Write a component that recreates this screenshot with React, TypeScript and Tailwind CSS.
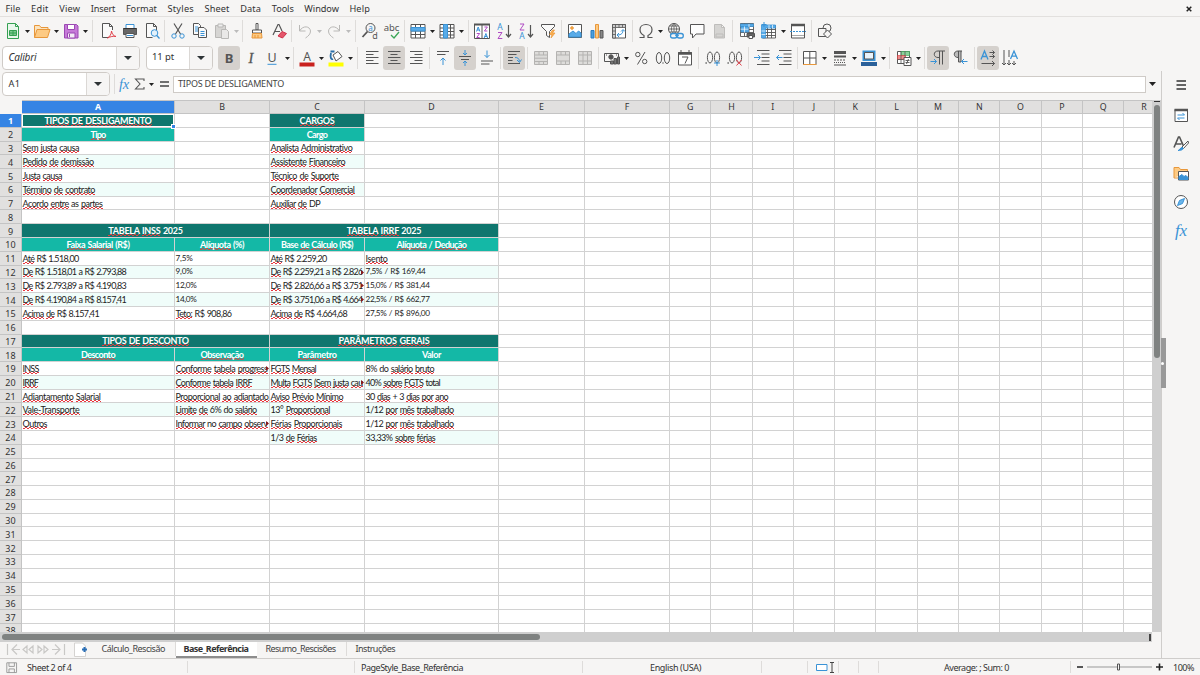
import { useLayoutEffect, useRef, type ReactNode } from "react";

const K = "#555555";
const B = "#3a93d6";
const G = "#b9b8b6";

/* Text whose tracking is adjusted so that it takes a given width. */
function Fit({ w, className = "", children }: { w: number; className?: string; children: ReactNode }) {
  const ref = useRef<HTMLSpanElement>(null);
  useLayoutEffect(() => {
    const el = ref.current;
    if (!el) return;
    el.style.letterSpacing = "0px";
    const n = (el.textContent || "").length;
    el.style.letterSpacing = `${(w - el.getBoundingClientRect().width) / n}px`;
  }, [w]);
  return (
    <span ref={ref} className={`inline-block whitespace-pre ${className}`}>
      {children}
    </span>
  );
}

function Svg({ children, s = 18 }: { children: ReactNode; s?: number }) {
  return (
    <svg width={s} height={s} viewBox="0 0 18 18" fill="none" stroke={K} strokeWidth="1" className="shrink-0">
      {children}
    </svg>
  );
}

function T({ x, y, s, c = K, children, w = "400", f = "Noto Sans, sans-serif" }: { x: number; y: number; s: number; c?: string; children: ReactNode; w?: string; f?: string }) {
  return (
    <text x={x} y={y} fontSize={s} fill={c} stroke="none" fontFamily={f} fontWeight={w} textAnchor="middle">
      {children}
    </text>
  );
}

const lines = (ys: number[], x1: number[], x2: number[]) => ys.map((y, i) => <path key={y} d={`M${x1[i % x1.length]} ${y}H${x2[i % x2.length]}`} />);

const icons: Record<string, ReactNode> = {
  new: (
    <>
      <path d="M3.5 1.5h8l3 3v12h-11z" fill="#e9f7ec" stroke="#35a052" />
      <path d="M11.5 1.5v3h3" stroke="#35a052" />
      <path d="M5.500 8.500h7v5h-7zM9 8.500v5M5.500 11h7" fill="#7ccb8f" stroke="#35a052" />
    </>
  ),
  open: (
    <>
      <path d="M1.500 15.500v-12h5l1.500 2h7v3" fill="#fbe3bd" stroke="#e8973a" />
      <path d="M1.500 15.500l2.500-8h13l-2.500 8z" fill="#fdca83" stroke="#e8973a" />
    </>
  ),
  save: (
    <>
      <path d="M2.500 2.500h12l1.500 1.500v12h-13.500z" fill="#c67ad8" stroke="#9b48b3" />
      <path d="M5.500 2.500h7v5h-7z" fill="#fff" stroke="#9b48b3" />
      <path d="M5.500 11h7.500v5h-7.500z" fill="#f4ecf6" stroke="#9b48b3" />
      <path d="M7.500 12v3" stroke="#9b48b3" />
    </>
  ),
  pdf: (
    <>
      <path d="M13.500 8V4.500l-3-3h-7v14h6M10.500 1.500v3h3" fill="#fafafa" />
      <path d="M8.500 16c2-1 4-4 4-7 .5 3 2 5 4.500 5.500-3-.7-5.500.2-8.500 1.500z" stroke="#e0404a" />
    </>
  ),
  print: (
    <>
      <path d="M5 2.500h8v4h-8z" fill="#fff" stroke="#3a93d6" />
      <path d="M2.500 6.500h13v6h-13z" fill="#666" />
      <path d="M2.500 6.500h13" stroke="#333" />
      <path d="M5 11.500h8v4h-8z" fill="#fff" />
      <path d="M6 13.500h6" stroke={B} />
    </>
  ),
  preview: (
    <>
      <path d="M13.500 8V4.500l-3-3h-7v14h6M10.500 1.500v3h3" fill="#fafafa" />
      <circle cx="11.500" cy="11" r="3.300" stroke={B} fill="#e3f1fb" />
      <path d="M13.800 13.500l2.700 3" stroke={B} strokeWidth="1.300" />
    </>
  ),
  cut: (
    <>
      <path d="M5 1.500l6.500 10.500M13 1.500L6.500 12" strokeWidth="1.200" />
      <circle cx="5" cy="14" r="2.200" stroke={B} />
      <circle cx="13" cy="14" r="2.200" stroke={B} />
    </>
  ),
  copy: (
    <>
      <path d="M2.500 1.500h5l2 2v9h-7z" fill="#fafafa" />
      <path d="M4 5h3M4 7h3M4 9h3" stroke={B} />
      <path d="M7.500 5.500h5.500l2.500 2.500v7.500h-8z" fill="#fafafa" />
      <path d="M9.500 9.500h4M9.500 11.500h4M9.500 13.500h4" stroke={B} />
    </>
  ),
  paste: (
    <g stroke={G}>
      <path d="M2.500 3.500h10v12h-10z" fill="#d6d5d3" />
      <path d="M5 2h5v3h-5z" fill="#eee" />
      <path d="M8.500 7.500h5l2 2v7h-7z" fill="#e9e8e7" />
    </g>
  ),
  clone: (
    <>
      <path d="M8 1.500h2v6.500h-2z" fill="#fff" />
      <path d="M4.500 8h9v3h-9z" fill="#fff" />
      <path d="M4.500 11.500h9l.5 4.500h-10z" fill="#fdca83" stroke="#e8973a" />
      <path d="M7 13v3M10 13v3" stroke="#e8973a" />
    </>
  ),
  clear: (
    <>
      <path d="M3 13L8 2.500h1L12 9M5 9.500h5" strokeWidth="1.200" />
      <path d="M8 14l4-4.500 4.500 2-4 4.500z" fill="#e4576b" stroke="#cf2f48" />
    </>
  ),
  undo: <path d="M3.500 3v6h6M3.500 9C7 3 14 4 14.500 9c0 3-2 5-5 7" stroke={G} />,
  redo: <path d="M14.500 3v6h-6M14.500 9C11 3 4 4 3.500 9c0 3 2 5 5 7" stroke={G} />,
  find: (
    <>
      <circle cx="9.500" cy="6" r="4.500" />
      <path d="M6.500 9.500l-5 5.500" strokeWidth="1.800" />
      <T x={9.500} y={8.500} s={8} c={B}>a</T>
      <T x={14} y={16.500} s={9}>d</T>
    </>
  ),
  spell: (
    <>
      <T x={8.500} y={9} s={9.500}>abc</T>
      <path d="M8 13l3 3 5-6" stroke="#3aa757" strokeWidth="1.300" />
    </>
  ),
  row: (
    <>
      <path d="M2 2.500h14v13.500h-14zM2 12.500h14M6.500 2v14M11.500 2v14M2 9h14" fill="#fff" />
      <path d="M2 5.500h14v3.500h-14z" fill="#58abe8" stroke={B} />
    </>
  ),
  col: (
    <>
      <path d="M2 2.500h14v13.500h-14zM2 6h14M2 9.500h14M2 13h14M12.500 2v14" fill="#fff" />
      <path d="M5.500 2.500h4v13.500h-4z" fill="#58abe8" stroke={B} />
    </>
  ),
  sort: (
    <>
      <path d="M1.500 2.500h15v14h-15zM9 2.500v14" fill="#fff" />
      <path d="M1 2.500h16" strokeWidth="2" />
      <path d="M3.500 9.500l1.700-4.500 1.700 4.500M4 8h2.400M11.200 16l1.700-4.500 1.700 4.500M11.700 14.500h2.400" stroke={B} />
      <path d="M3.700 11.500h3l-3 4h3M11.400 5h3l-3 4h3" stroke="#b04cc4" />
    </>
  ),
  asc: (
    <>
      <T x={5} y={8} s={8.500} c={B}>A</T>
      <path d="M3 10.500h4l-4 6h4.300" stroke="#b04cc4" />
      <path d="M13.500 3v12M11 12l2.500 3 2.500-3" strokeWidth="1.200" />
    </>
  ),
  desc: (
    <>
      <path d="M3 2h4l-4 6h4.300" stroke="#b04cc4" />
      <T x={5} y={17} s={8.500} c={B}>A</T>
      <path d="M13.500 3v12M11 12l2.500 3 2.500-3" strokeWidth="1.200" />
    </>
  ),
  filter: (
    <>
      <path d="M2.500 2.500h13v2l-5 5v6l-3-2v-4l-5-5z" fill="#fafafa" />
      <path d="M13.500 8l-3 4.500h2.500l-1 3.500 4-5h-2.500l2-3z" fill="#fdb04e" stroke="#e8973a" strokeWidth=".7" />
    </>
  ),
  image: (
    <>
      <path d="M2.500 2.500h13v13h-13z" fill="#fff" />
      <path d="M3 15v-3l4-3 3 2.500 2.500-2.500 2.500 2v4z" fill="#58abe8" stroke={B} />
      <circle cx="6" cy="6" r="1.300" fill="#fdb04e" stroke="#e8973a" />
    </>
  ),
  chart: (
    <>
      <path d="M3 8.500h3v7.500h-3z" fill="#4b9fde" stroke="#2b7bbd" />
      <path d="M7.500 2.500h3v13.500h-3z" fill="#fdca83" stroke="#e8973a" />
      <path d="M12 8.500h3v7.500h-3z" fill="#888" />
    </>
  ),
  pivot: (
    <>
      <path d="M2.500 2.500h13v13.500h-13z" fill="#fff" />
      <path d="M2.500 2.500h13v3h-10v10.500h-3z" fill="#ccc" strokeWidth=".8" />
      <path d="M5.500 2.500v3h-3M9 2.500v3M12.500 2.500v3M2.500 9h3M2.500 12.500h3" strokeWidth=".8" />
      <path d="M7.500 13c4 0 5.500-2 5.500-5M11 9.500l2-2 2 2M9 11l-2 2 2 2" stroke={B} />
    </>
  ),
  omega: <path d="M2.500 15.500h4.500v-2c-3-1.500-4-4-4-6C3 4.500 5.500 2.500 9 2.500s6 2 6 5c0 2-1 4.500-4 6v2h4.500" strokeWidth="1.200" />,
  link: (
    <>
      <circle cx="8" cy="7" r="5.500" />
      <path d="M2.500 7h11M8 1.500v11M8 1.500c-3.500 3-3.500 8 0 11M8 1.500c3.500 3 3.500 8 0 11M3.500 4h9M3.500 10h9" strokeWidth=".8" />
      <rect x="4.500" y="11.500" width="6.500" height="4.500" rx="2.200" stroke={B} fill="#f6f5f4" strokeWidth="1.300" />
      <rect x="11" y="11.500" width="6.300" height="4.500" rx="2.200" stroke={B} fill="#f6f5f4" strokeWidth="1.300" />
      <path d="M9 13.700h4" stroke={B} />
    </>
  ),
  comment: <path d="M2.500 2.500h13.500v9.500h-8l-3.500 4v-4h-2z" fill="#fdfdfd" />,
  header: <path d="M4.500 2.500h7l3 3v10.500h-10zM11.500 2.500v3h3M6 12h7v3h-7z" fill="#d5d4d2" stroke="#bebdbb" />,
  parea: (
    <>
      <path d="M2.500 1.500h13v13h-13zM2.500 4.500h13M2.500 7.500h13M2.500 10.500h13M6.500 1.500v13M11 1.500v13" fill="#fff" strokeWidth=".9" />
      <path d="M2.500 2h13v2.500h-13zM3 4.500h7.500v5.500h-7.500z" fill="#58abe8" stroke={B} strokeWidth=".7" />
      <path d="M2.500 7.200h8M6.500 4.500v6M11 2v3" stroke="#fff" strokeWidth=".7" />
      <path d="M9 11.500h7.500v3.500h-7.500z" fill="#666" />
      <path d="M11 13.500h3.500v3h-3.500z" fill="#fff" />
    </>
  ),
  freeze: (
    <>
      <path d="M2.500 3.500h13v12.500h-13zM2.500 7.500h13M2.500 10.500h13M2.500 13.500h13M7.500 3.500v12.500M11.500 3.500v12.500" fill="#fff" strokeWidth=".9" />
      <path d="M1.500 3h14v3h-10v10h-4z" fill="#58abe8" stroke={B} strokeWidth=".8" />
      <path d="M1.500 9h4M1.500 12.500h4M9 3v3M12.500 3v3" stroke="#fff" strokeWidth=".7" />
      <path d="M4 0v5M1.500 2.500h5" stroke={B} />
    </>
  ),
  split: (
    <>
      <path d="M2.500 3h13v13h-13z" fill="#fff" />
      <path d="M2 3h14" strokeWidth="2.500" />
      <path d="M1 9.500h16" stroke={B} strokeDasharray="2 1" />
      <path d="M2.500 13.500h13" strokeWidth=".5" />
    </>
  ),
  shapes: (
    <>
      <circle cx="11" cy="6" r="4" />
      <path d="M2.500 6.500h7.500v8h-7.500z" fill="#f6f5f4" />
      <path d="M11.500 8l4 4-4 4-4-4z" fill="#f6f5f4" />
    </>
  ),
  bold: <T x={9} y={13.500} s={13} w="700">B</T>,
  italic: (
    <text x="9" y="14" fontSize="14.500" fill={K} stroke={K} strokeWidth=".3" fontStyle="italic" fontFamily="Liberation Serif, serif" textAnchor="middle">
      I
    </text>
  ),
  under: (
    <>
      <T x={8} y={12.500} s={12.500}>U</T>
      <path d="M3.500 15.300h9" stroke={B} />
    </>
  ),
  fcolor: (
    <>
      <T x={9} y={11.500} s={12}>A</T>
      <path d="M1.500 15.500h15" stroke="#c9211e" strokeWidth="4" />
    </>
  ),
  hilite: (
    <>
      <path d="M6 6l5-3.500 4 5-6 4.500z" fill="#fff" />
      <path d="M4 4c-1 4 0 7 2 6M3.500 2.500h4" stroke="#2b6fa8" strokeWidth="1.800" />
      <path d="M1.500 15.500h15" stroke="#ffff00" strokeWidth="4" />
    </>
  ),
  left: <>{lines([2.500, 5.500, 8.500, 11.500, 14.500], [3], [15.500, 10.500])}</>,
  center: <>{lines([2.500, 5.500, 8.500, 11.500, 14.500], [3, 5.500], [15.500, 12.500])}</>,
  right: <>{lines([2.500, 5.500, 8.500, 11.500, 14.500], [3, 7.500], [15.500, 15.500])}</>,
  top: (
    <>
      {lines([2.500, 5.500], [3, 3], [15, 11.500])}
      <path d="M9 16v-7M6.500 11.500l2.500-2.500 2.500 2.500" stroke={B} />
    </>
  ),
  middle: (
    <>
      {lines([7.500, 10.500], [3, 5], [15, 13])}
      <path d="M9 1v5M7 4l2 2 2-2M9 17v-5M7 14l2-2 2 2" stroke={B} />
    </>
  ),
  bottom: (
    <>
      {lines([12, 15], [3, 3], [15, 11.500])}
      <path d="M9 1.500v7M6.500 6l2.500 2.500 2.500-2.500" stroke={B} />
    </>
  ),
  wrap: (
    <>
      {lines([2.500, 5.500, 8.500, 11.500, 14.500], [3], [15, 11.500, 8, 7.500, 15])}
      <path d="M10 8.500c3 0 4 1 4.500 4M12 11l2.500 2.500 2-3" stroke={B} />
    </>
  ),
  merge1: <path d="M2.500 2.500h13v13h-13zM2.500 6h13M2.500 12.500h13M7 2.500v3.500M11.500 2.500v3.500M7 12.500v3M11.500 12.500v3M2.500 9.200h13" fill="#dddcda" stroke="#b4b3b1" />,
  merge2: <path d="M2.500 2.500h13v13h-13zM2.500 6h13M2.500 12h13M7 2.500v3.500M11.500 2.500v3.500M7 12v3.500M11.500 12v3.500" fill="#dddcda" stroke="#b4b3b1" />,
  merge3: <path d="M2.500 2.500h13v13h-13zM2.500 6h13M2.500 12h13M7 2.500v13M11.500 2.500v13" fill="#dddcda" stroke="#b4b3b1" />,
  currency: (
    <>
      <path d="M1.500 4.500h14v8h-14z" />
      <circle cx="8" cy="8" r="2.200" fill={K} />
      <path d="M3 6h1M13 6h1" />
      <path d="M7.500 12h3v3h-3zM11 9.500h2.500v5.500h-2.500zM14.500 8h2v7h-2z" fill="#777" />
    </>
  ),
  percent: (
    <>
      <circle cx="5.800" cy="5.500" r="2.200" />
      <circle cx="12.700" cy="12.500" r="2.200" />
      <path d="M13 3l-7.500 12.500" />
    </>
  ),
  dec: (
    <>
      <ellipse cx="5" cy="9" rx="2.700" ry="5.500" />
      <ellipse cx="13" cy="9" rx="2.700" ry="5.500" />
      <path d="M8.500 14h1" strokeWidth="1.300" />
    </>
  ),
  date: (
    <>
      <path d="M2.500 3.500h13v12.500h-13z" fill="#fff" />
      <path d="M2 4.500h14" strokeWidth="2.500" />
      <path d="M5 1v3M13 1v3M6 8h6l-3 6.500" />
    </>
  ),
  decadd: (
    <>
      <ellipse cx="6" cy="8.500" rx="2.600" ry="5.500" />
      <ellipse cx="13" cy="8.500" rx="2.600" ry="5.500" />
      <path d="M1.500 14h1.300" strokeWidth="1.500" />
      <path d="M13 11v6M10 14h6" stroke={B} />
    </>
  ),
  decdel: (
    <>
      <ellipse cx="6" cy="8.500" rx="2.600" ry="5.500" />
      <ellipse cx="13" cy="8.500" rx="2.600" ry="5.500" />
      <path d="M1.500 14h1.300" strokeWidth="1.500" />
      <path d="M10.500 11l5 5.500M15.500 11l-5 5.500" stroke="#e0404a" />
    </>
  ),
  indent: (
    <>
      {lines([1.500, 5, 8.500, 12, 15.500], [4, 8.500, 8.500, 8.500, 4], [16.500])}
      <path d="M1 8.500h6M5 6l2.500 2.500-2.500 2.500" stroke={B} />
    </>
  ),
  outdent: (
    <>
      {lines([1.500, 5, 8.500, 12, 15.500], [4, 8.500, 8.500, 8.500, 4], [16.500])}
      <path d="M7.500 8.500h-6M4 6l-2.500 2.500 2.500 2.500" stroke={B} />
    </>
  ),
  borders: (
    <>
      <path d="M2.500 15.500v-13h12.500v13M8.800 2.500v13M2.500 9h12.500" fill="#fff" />
      <path d="M2 15.500h13.500" stroke="#e8973a" />
    </>
  ),
  bstyle: (
    <>
      <path d="M3 3.500h12" strokeWidth="3" />
      <path d="M3 7.500h12" strokeWidth="2" />
      <path d="M3 11h12" strokeDasharray="2 1" />
      <path d="M3 13.500h12" strokeDasharray="1 1" />
      <path d="M3 16h12" />
    </>
  ),
  bcolor: (
    <>
      <path d="M3.500 2.500h11v8.500h-11z" fill="#e9f3fb" stroke={B} strokeWidth="2" />
      <path d="M4.500 3.500h9v6.500h-9z" />
      <path d="M1 15h16" stroke="#2a6099" strokeWidth="4" />
    </>
  ),
  cond: (
    <>
      <path d="M2.500 2.500h12v12h-12z" fill="#fff" />
      <path d="M6 2.500h8.500v4h-8.500z" fill="#8ad29a" stroke="#3aa757" strokeWidth=".6" />
      <path d="M2.500 6.500h8v4h-8z" fill="#ee8c8c" stroke="#d33" strokeWidth=".6" />
      <path d="M2.500 10.500h6M6 2.500v12M10 2.500v5" strokeWidth=".8" />
      <path d="M9 8.500h7v8h-7z" fill="#fff" />
      <path d="M10.500 11.500h4M10.500 13.500h4M13.500 10l-2 5" strokeWidth=".9" />
    </>
  ),
  ltr: (
    <>
      <path d="M16 2h-7c-5 0-5 6.500 0 6.500h1M10.500 2v13.500M13.500 2v13.500" />
      <path d="M1.500 12.500h6M5 10l2.500 2.500-2.500 2.500" stroke={B} />
    </>
  ),
  rtl: (
    <>
      <path d="M11 2h-4c-5 0-5 6.500 0 6.500h1M7.500 2v11h2.500v-11" fill="#bbb" />
      <path d="M16.500 12.500h-6M13 10l-2.500 2.500 2.500 2.500" stroke={B} />
    </>
  ),
  horiz: (
    <>
      <path d="M2 10.500l3.500-8.500 3.500 8.500M3.300 7.500h4.500" stroke={B} strokeWidth="1.300" />
      <path d="M10.500 3.500h5M10.500 7.500h5M2.500 14.500h13M13.500 1.500l2 2-2 2M13.500 5.500l2 2-2 2M13 12l2.500 2.500-2.500 2.500" />
    </>
  ),
  vert: (
    <>
      <path d="M9.500 10l3.500-8 3.500 8M10.800 7.200h4.500" stroke={B} strokeWidth="1.300" />
      <path d="M3 1v15M1 14l2 2 2-2M8 1v7M8 11v5M6 14l2 2 2-2M13 12v4M11 14l2 2 2-2" />
    </>
  ),
};

type Item = { i?: string; a?: 1 | 2; s?: string; on?: boolean };

function Tools({ items }: { items: Item[] }) {
  return (
    <>
      {items.map((t, k) =>
        t.s ? (
          <div key={k} className={`${t.s} flex h-[22px] shrink-0 justify-center`}>
            <div className="h-full w-px bg-[#dedcda]" />
          </div>
        ) : t.a ? (
          <div key={k} className="flex w-[7.25px] shrink-0 justify-center pt-[2px]">
            <svg width="5" height="3" viewBox="0 0 5 3">
              <path d="M0 0h5L2.500 3z" fill={t.a === 2 ? "#bbb" : "#222"} />
            </svg>
          </div>
        ) : (
          <div key={k} className={`flex h-6 w-[22px] shrink-0 items-center justify-center rounded-[3px] ${t.on ? "bg-[#d5d1cd]" : ""}`}>
            <Svg>{icons[t.i!]}</Svg>
          </div>
        ),
      )}
    </>
  );
}

const i = (name: string, on = false): Item => ({ i: name, on });
const a: Item = { a: 1 };
const ag: Item = { a: 2 };
const s = (c: string): Item => ({ s: c });

const bar1: Item[] = [
  i("new"), a, i("open"), a, i("save"), a, s("w-[7.25px]"), i("pdf"), i("print"), i("preview"), s("w-[4.5px]"),
  i("cut"), i("copy"), i("paste"), ag, s("w-[5.25px]"), i("clone"), i("clear"), s("w-[4px]"),
  i("undo"), ag, i("redo"), ag, s("w-[6.5px]"), i("find"), i("spell"), s("w-[4.5px]"),
  i("row"), a, i("col"), a, s("w-[5.5px]"), i("sort"), i("asc"), i("desc"), i("filter"), s("w-[5px]"),
  i("image"), i("chart"), i("pivot"), s("w-[4.5px]"), i("omega"), a, i("link"), i("comment"), i("header"), s("w-[6px]"),
  i("parea"), i("freeze"), a, i("split"), s("w-[5px]"), i("shapes"),
];

const bar2: Item[] = [
  i("bold", true), i("italic"), i("under"), a, s("w-[4.75px]"), i("fcolor"), a, i("hilite"), a, s("w-[6.5px]"),
  i("left"), i("center", true), i("right"), s("w-[5px]"), i("top"), i("middle", true), i("bottom"), s("w-[5.5px]"),
  i("wrap", true), s("w-[5px]"), i("merge1"), i("merge2"), i("merge3"), s("w-[4.5px]"),
  i("currency"), a, i("percent"), i("dec"), i("date"), s("w-[6px]"), i("decadd"), i("decdel"), s("w-[5.5px]"),
  i("indent"), i("outdent"), s("w-[4px]"), i("borders"), a, i("bstyle"), a, i("bcolor"), a, s("w-[5.5px]"),
  i("cond"), a, s("w-[5.25px]"), i("ltr", true), i("rtl"), s("w-[6px]"), i("horiz", true), i("vert"),
];

function Combo({ text, tw, box, cls = "" }: { text: string; tw: number; box: string; cls?: string }) {
  return (
    <div className={`flex h-6 shrink-0 overflow-hidden rounded-[4px] border border-[#cfcbc7] bg-white ${box}`}>
      <div className="flex flex-1 items-center pl-[5.5px] text-[#333]">
        <Fit w={tw} className={cls}>{text}</Fit>
      </div>
      <div className="flex w-[23px] items-center justify-center border-l border-[#dbd8d5] bg-[#f6f5f4]">
        <svg width="8" height="4" viewBox="0 0 8 4">
          <path d="M0 0h8L4 4z" fill="#2e3436" />
        </svg>
      </div>
    </div>
  );
}

const menus: [string, number][] = [
  ["File", 15], ["Edit", 17.5], ["View", 21], ["Insert", 24.500], ["Format", 31], ["Styles", 26.500],
  ["Sheet", 25], ["Data", 21], ["Tools", 22], ["Window", 34.500], ["Help", 20.500],
];

/* Cell kinds: t = section title, h = column heading, p = plain, l = banded */
type Cell = { k: "t" | "h" | "p" | "l"; v?: string; w?: number; span?: number; more?: boolean };
const t = (v: string, w: number, span = 1): Cell => ({ k: "t", v, w, span });
const h = (v: string, w: number): Cell => ({ k: "h", v, w });
const p = (v: string, w: number, more = false): Cell => ({ k: "p", v, w, more });
const l = (v: string, w: number, more = false): Cell => ({ k: "l", v, w, more });
const e: Cell = { k: "p" };

const data: Record<number, Cell[]> = {
  1: [t("TIPOS DE DESLIGAMENTO", 107), e, t("CARGOS", 35), e],
  2: [h("Tipo", 15), e, h("Cargo", 20.500), e],
  3: [p("Sem justa causa", 56.5), e, p("Analista Administrativo", 82), e],
  4: [l("Pedido de demissão", 71), e, l("Assistente Financeiro", 74.5), e],
  5: [p("Justa causa", 39.5), e, p("Técnico de Suporte", 68), e],
  6: [l("Término de contrato", 72.5), e, l("Coordenador Comercial", 84), e],
  7: [p("Acordo entre as partes", 80), e, p("Auxiliar de DP", 49.5), e],
  9: [t("TABELA INSS 2025", 74.5, 2), t("TABELA IRRF 2025", 74.5, 2)],
  10: [h("Faixa Salarial (R$)", 63), h("Alíquota (%)", 44), h("Base de Cálculo (R$)", 72), h("Alíquota / Dedução", 70)],
  11: [p("Até R$ 1.518,00", 56), p("7,5%", 17), p("Até R$ 2.259,20", 56), p("Isento", 22)],
  12: [l("De R$ 1.518,01 a R$ 2.793,88", 103.5), l("9,0%", 17), l("De R$ 2.259,21 a R$ 2.826", 92, true), l("7,5% / R$ 169,44", 60)],
  13: [p("De R$ 2.793,89 a R$ 4.190,83", 103.5), p("12,0%", 21), p("De R$ 2.826,66 a R$ 3.751", 92, true), p("15,0% / R$ 381,44", 64)],
  14: [l("De R$ 4.190,84 a R$ 8.157,41", 103.5), l("14,0%", 21), l("De R$ 3.751,06 a R$ 4.664", 92, true), l("22,5% / R$ 662,77", 64)],
  15: [p("Acima de R$ 8.157,41", 76.5), p("Teto: R$ 908,86", 56), p("Acima de R$ 4.664,68", 76.5), p("27,5% / R$ 896,00", 64)],
  17: [t("TIPOS DE DESCONTO", 86.5, 2), t("PARÂMETROS GERAIS", 91, 2)],
  18: [h("Desconto", 34), h("Observação", 43), h("Parâmetro", 39), h("Valor", 19)],
  19: [p("INSS", 16), p("Conforme tabela progress", 92, true), p("FGTS Mensal", 45.5), p("8% do salário bruto", 68.5)],
  20: [l("IRRF", 15.5), l("Conforme tabela IRRF", 76.5), l("Multa FGTS (Sem justa cau", 92, true), l("40% sobre FGTS total", 74.5)],
  21: [p("Adiantamento Salarial", 78), p("Proporcional ao adiantado", 93), p("Aviso Prévio Mínimo", 72.5), p("30 dias + 3 dias por ano", 82.5)],
  22: [l("Vale-Transporte", 57), l("Limite de 6% do salário", 81), l("13° Proporcional", 59.5), l("1/12 por mês trabalhado", 88)],
  23: [p("Outros", 24.5), p("Informar no campo observ", 92, true), p("Férias Proporcionais", 71.5), p("1/12 por mês trabalhado", 88)],
  24: [e, e, l("1/3 de Férias", 46), l("33,33% sobre férias", 69.5)],
};

const known = new Set(["as", "do", "no", "a", "R$", "(R$)", "DP", "total", "Base", "Cargo", "Valor"]);

function Words({ v }: { v: string }) {
  return (
    <>
      {v.split(" ").map((word, n) => {
        const bad = /[A-Za-z]/.test(word) && !known.has(word);
        return (
          <span key={n}>
            {n > 0 ? " " : ""}
            <span className={bad ? "bg-[repeating-conic-gradient(#e8383e_0_25%,transparent_0_50%)] bg-[length:4px_2px] bg-[position:0_100%] bg-repeat-x" : ""}>{word}</span>
          </span>
        );
      })}
    </>
  );
}

const kinds = {
  t: "bg-[#0f766e] text-white font-bold justify-center",
  h: "bg-[#14b8a6] text-white font-bold justify-center",
  p: "bg-white text-[#1c1c1c] pl-[0.5px]",
  l: "bg-[#f0fdfa] text-[#1c1c1c] pl-[0.5px]",
};

const cols = "grid grid-rows-[100%] grid-cols-[22px_153px_95px_95px_134px_86px_85px_repeat(12,41.3px)]";
const letters = "ABCDEFGHIJKLMNOPQR".split("");

function CellBox({ c, sel }: { c: Cell; sel: boolean }) {
  const small = c.v ? /^\d+,\d%($| \/)/.test(c.v) : false;
  return (
    <div className={`relative flex min-w-0 items-center border-r border-b border-[#d2d2d2] ${kinds[c.k]} ${c.span === 2 ? "col-span-2" : ""}`}>
      {c.v && (
        <div className={`flex h-[13px] shrink-0 items-center leading-[13px] [word-spacing:0.6px] ${c.more ? "max-w-full overflow-hidden" : ""} ${small ? "text-[8.2px]" : ""}`}>
          <Fit w={c.w!}><Words v={c.v} /></Fit>
        </div>
      )}
      {c.more && (
        <svg width="3" height="5" viewBox="0 0 3 5" className="absolute top-[4px] right-0">
          <path d="M0 0l3 2.500L0 5z" fill="#8b1a1a" />
        </svg>
      )}
      {sel && (
        <>
          <div className="absolute inset-0 border border-white" />
          <div className="absolute -right-[2px] -bottom-[2px] z-10 box-content size-[3px] border border-white bg-[#3584e4]" />
        </>
      )}
    </div>
  );
}

function Grid() {
  return (
    <div className="h-[532px] w-[1152px] overflow-hidden">
      <div className={`${cols} h-[14px] w-max`}>
        <div className="bg-[#f6f5f4]" />
        {letters.map((c, n) => (
          <div
            key={c}
            className={`flex items-center border-t border-r border-b border-[#c4c4c4] text-[8.8px] leading-none ${n === 0 ? "justify-center bg-[#3584e4] font-bold text-white" : "bg-[#e1e0df] text-[#333]"} ${c === "R" ? "pl-[17px]" : "justify-center"}`}
          >
            {c}
          </div>
        ))}
      </div>
      {Array.from({ length: 38 }, (_, n) => n + 1).map((r) => (
        <div key={r} className={`${cols} h-[13.79px] w-max`}>
          <div className={`flex items-center justify-center border-r border-b border-[#c4c4c4] pt-px text-[9px] leading-none ${r === 1 ? "bg-[#3584e4] font-bold text-white" : "bg-[#e1e0df] text-[#333]"}`}>{r}</div>
          <div className="col-span-4 grid grid-cols-[153px_95px_95px_134px] grid-rows-[100%] font-[Lato,sans-serif] text-[9px]">
            {(data[r] || [e, e, e, e]).map((c, n) => (
              <CellBox key={n} c={c} sel={r === 1 && n === 0} />
            ))}
          </div>
          {letters.slice(4).map((c) => (
            <div key={c} className="border-r border-b border-[#d2d2d2] bg-white" />
          ))}
        </div>
      ))}
    </div>
  );
}

function Side() {
  return (
    <div className="flex w-[39px] shrink-0 flex-col items-center border-l border-[#cfcdcb] pt-[5px]">
      <div className="flex h-[30px] items-start justify-center">
        <Svg>
          <path d="M4.500 5h9.500M4.500 9h9.500M4.500 13h9.500" stroke="#333" strokeWidth="1.500" />
        </Svg>
      </div>
      <div className="h-[29px]">
        <Svg>
          <path d="M3 3.500h12.500v12h-12.500z" fill="#fff" />
          <path d="M2.500 4h13.500" strokeWidth="2.500" />
          <path d="M5.500 9h7M5.500 12h7M10.500 7l2 2M7.500 14l-2-2" stroke={B} />
        </Svg>
      </div>
      <div className="h-[29px]">
        <Svg>
          <path d="M2 12.500L6.500 2h1l4 9M4 9h5.500" strokeWidth="1.600" />
          <path d="M16 6l-6 6 1.500 1.500L16.500 8z" fill="#fff" />
          <path d="M6 15.500c2 0 2-3 4-3s2 3-4 3z" fill={B} stroke={B} />
        </Svg>
      </div>
      <div className="h-[29px]">
        <Svg>
          <path d="M2 14V3.500h5l1.500 2h7v2M2 14h4" fill="#fdca83" stroke="#e8973a" />
          <path d="M6.500 7.500h10v8.500h-10z" fill="#fff" />
          <path d="M7 15.500v-3l3-2 2 2 2-1 2 2v2z" fill={B} stroke={B} />
        </Svg>
      </div>
      <div className="h-[29px]">
        <Svg>
          <circle cx="9" cy="9" r="6.500" fill="#fff" />
          <path d="M12.500 5.500l-2 5-5 2 2-5z" fill="#6bb5ea" stroke={B} />
        </Svg>
      </div>
      <div className="font-[Liberation_Serif,serif] text-[17px] leading-[18px] text-[#3a93d6] italic">
        <Fit w={12}>fx</Fit>
      </div>
    </div>
  );
}

function Tabs() {
  return (
    <div className="flex h-4 items-start text-[9px] leading-[14px] text-[#444]">
      <svg width="62" height="14" viewBox="0 0 62 14" className="ml-[5px]" fill="none" stroke="#c9c8c6">
        <path d="M2.500 2v11M12 2.500l-5 5 5 5M7 7.500h8M22 4l-4 3.500 4 3.500zM28 4l-4 3.500 4 3.500zM33 4l4 3.500-4 3.500zM39 4l4 3.500-4 3.500zM50 2.500l5 5-5 5M47 7.500h8M59.500 2v11" strokeWidth="1.200" />
      </svg>
      <svg width="14" height="15" viewBox="0 0 14 15" className="ml-[7px]">
        <path d="M.5 1h8l3 3v10.500h-11z" fill="#fff" stroke="#d5d3d1" />
        <path d="M10.500 5v5M8 7.500h5" stroke="#2b6fb5" strokeWidth="2" />
      </svg>
      <div className="ml-[13.5px] w-[74px] border-r border-[#dddbd9]"><Fit w={63.5}>Cálculo_Rescisão</Fit></div>
      <div className="flex h-4 w-[81px] justify-center border-b-2 border-[#8d8d8d] bg-white font-bold text-[#333]"><Fit w={65}>Base_Referência</Fit></div>
      <div className="ml-[9px] w-[81px] border-r border-[#dddbd9]"><Fit w={70}>Resumo_Rescisões</Fit></div>
      <div className="ml-[9px]"><Fit w={39.5}>Instruções</Fit></div>
    </div>
  );
}

const Rule = () => <div className="h-3 w-px shrink-0 bg-[#dedcda]" />;

function Status() {
  return (
    <div className="flex h-[17px] items-center border-t border-[#cfcdcb] text-[9px] leading-none text-[#333]">
      <div className="flex w-[27px] pl-[5px]">
        <svg width="13" height="13" viewBox="0 0 18 18" fill="none" stroke="#999">
          <path d="M2.500 2.500h13.500v13.500h-13.500zM5.500 2.500v5h7.500v-5M5.500 16v-5h7.500v5" strokeWidth="1.300" />
        </svg>
      </div>
      <div className="w-[160px]"><Fit w={44.5}>Sheet 2 of 4</Fit></div>
      <Rule />
      <div className="w-[166px]" />
      <Rule />
      <div className="w-[114px] pl-[6px]"><Fit w={102}>PageStyle_Base_Referência</Fit></div>
      <div className="w-[113px]" />
      <Rule />
      <div className="w-[178px] pl-[67px]"><Fit w={51}>English (USA)</Fit></div>
      <Rule />
      <div className="w-[45px]" />
      <Rule />
      <div className="flex w-[30px] justify-end pr-[3px]">
        <svg width="20" height="13" viewBox="0 0 20 13" fill="none">
          <path d="M1.500 3.500h10.500v6h-10.500z" fill="#fff" stroke={B} />
          <path d="M15 1.500h4M17 1.500v10M15 11.500h4" stroke="#444" />
        </svg>
      </div>
      <Rule />
      <div className="w-[19px]" />
      <Rule />
      <div className="w-[19px]" />
      <Rule />
      <div className="flex w-[191px] pl-[65px]"><Fit w={65}>Average: ; Sum: 0</Fit></div>
      <Rule />
      <div className="flex w-[94px] justify-end">
        <svg width="88" height="10" viewBox="0 0 88 10" fill="none">
          <path d="M0 5h6M79 5h7M82.500 1.500v7" stroke="#222" strokeWidth="1.600" />
          <path d="M10 5h65" stroke="#999" />
          <path d="M40.500 2h2v6h-2z" fill="#f6f5f4" stroke="#555" />
        </svg>
      </div>
      <div className="ml-[8px]"><Fit w={21}>100%</Fit></div>
    </div>
  );
}

export default function App() {
  return (
    <div className="flex h-[675px] w-[1200px] flex-col overflow-hidden bg-[#f6f5f4] font-[Noto_Sans,sans-serif] text-[9px] text-[#333]">
      <div className="flex h-[17px] shrink-0 items-center border-b border-[#e2e0de] pt-px text-[9.2px] leading-none">
        <div className="flex flex-1 gap-[10.6px] pl-[5.5px]">
          {menus.map(([m, w]) => (
            <Fit key={m} w={w}>{m}</Fit>
          ))}
        </div>
        <svg width="6" height="6" viewBox="0 0 6 6" className="mr-2">
          <path d="M.7.7l4.600 4.600M5.300.7L.7 5.300" stroke="#222" strokeWidth="1.500" />
        </svg>
      </div>
      <div className="flex h-[27px] shrink-0 items-center pl-[1.5px]">
        <Tools items={bar1} />
      </div>
      <div className="flex h-[27px] shrink-0 items-center pl-[2px]">
        <Combo text="Calibri" tw={28} box="w-[138px]" cls="text-[10px] italic" />
        <div className="w-[5.5px]" />
        <Combo text="11 pt" tw={22} box="w-[67px]" cls="text-[9.5px]" />
        <div className="w-[5px]" />
        <Tools items={bar2} />
      </div>
      <div className="flex min-h-0 flex-1">
        <div className="flex w-[1161px] shrink-0 flex-col">
          <div className="flex h-[29px] shrink-0 items-center pb-[3px] pl-[2px]">
            <Combo text="A1" tw={12} box="w-[108px]" cls="text-[9.2px]" />
            <div className="flex w-[9px] justify-center"><div className="h-[20px] w-px bg-[#dedcda]" /></div>
            <div className="w-[14px] font-[Liberation_Serif,serif] text-[14.5px] leading-none text-[#3a93d6] italic"><Fit w={10}>fx</Fit></div>
            <svg width="14" height="16" viewBox="0 0 14 16" fill="none" stroke={K}>
              <path d="M11 5V3h-8.500l4.500 5-4.500 5h8.500v-2" strokeWidth="1.100" />
            </svg>
            <svg width="5" height="3" viewBox="0 0 5 3" className="ml-[2px]">
              <path d="M0 0h5L2.500 3z" fill="#222" />
            </svg>
            <svg width="9" height="8" viewBox="0 0 9 8" className="mr-[4px] ml-[6px]">
              <path d="M0 2h9M0 6h9" stroke="#444" strokeWidth="1.500" />
            </svg>
            <div className="flex h-[17px] w-[973px] items-center border border-[#cfcbc7] bg-white pl-[4px] text-[9px] text-[#444]">
              <Fit w={106}>TIPOS DE DESLIGAMENTO</Fit>
            </div>
            <svg width="7" height="4" viewBox="0 0 7 4" className="ml-[3px]">
              <path d="M0 0h7L3.500 4z" fill="#222" />
            </svg>
          </div>
          <div className="flex h-[532px]">
            <Grid />
            <div className="flex w-[9px] flex-col items-center bg-[#cfcfcf] pt-px">
              <div className="h-px w-[6px] bg-[#333]" />
              <div className="mt-[3px] h-[253px] w-[6px] rounded-full bg-[#7f8281]" />
            </div>
          </div>
          <div className="flex h-[10px] w-[1152px] items-center bg-[#cfcfcf] pl-[2px]">
            <div className="h-[6px] w-[538px] rounded-full bg-[#7f8281]" />
            <div className="mr-px ml-auto h-[7px] w-[2px] bg-[#444]" />
          </div>
          <Tabs />
        </div>
        <div className="relative flex">
          <Side />
          <div className="absolute top-[267px] left-0 flex h-[50px] w-[5px] items-center bg-[#999]">
            <div className="size-[3px] rounded-full bg-white" />
          </div>
        </div>
      </div>
      <Status />
    </div>
  );
}
